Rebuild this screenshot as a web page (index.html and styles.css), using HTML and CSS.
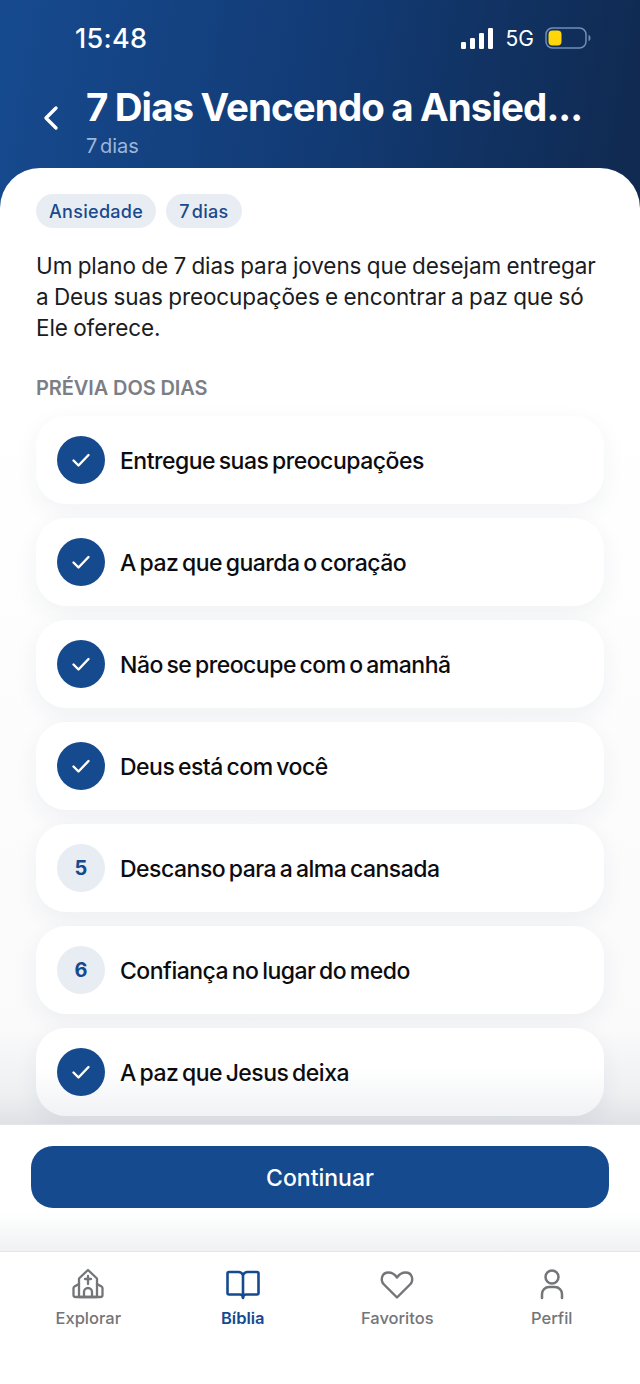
FILE: index.html
```html
<!DOCTYPE html>
<html lang="pt">
<head>
<meta charset="utf-8">
<title>7 Dias Vencendo a Ansiedade</title>
<link rel="stylesheet" href="styles.css">
</head>
<body>
<div class="screen">
  <header class="hero">
    <div class="status">
      <span class="time">15:48</span>
      <div class="status-right">
        <svg class="signal" width="33" height="21" viewBox="0 0 33 21"><rect x="0" y="14" width="5" height="7" rx="1.2"/><rect x="9" y="10" width="5" height="11" rx="1.2"/><rect x="18" y="5" width="5" height="16" rx="1.2"/><rect x="27" y="0" width="5" height="21" rx="1.2"/></svg>
        <span class="net">5G</span>
        <svg class="battery" width="46" height="22" viewBox="0 0 46 22"><rect x="1" y="1" width="40" height="20" rx="6.5" fill="none" stroke="#6f8db5" stroke-width="1.5"/><rect x="3.500" y="3.500" width="13" height="15" rx="4" fill="#ffd60a"/><path d="M44 8.500c1.300.6 1.300 4.400 0 5z" fill="#6f8db5" stroke="#6f8db5"/></svg>
      </div>
    </div>
    <div class="title-row">
      <svg class="back" width="18" height="26" viewBox="0 0 18 26"><path d="M14 3 4 13l10 10" fill="none" stroke="#fff" stroke-width="3.400" stroke-linecap="round" stroke-linejoin="round"/></svg>
      <div class="title-text">
        <h1>7 Dias Vencendo a Ansied...</h1>
        <p>7 dias</p>
      </div>
    </div>
  </header>
  <main class="sheet">
    <div class="tags"><span class="tag">Ansiedade</span><span class="tag">7 dias</span></div>
    <p class="desc">Um plano de 7 dias para jovens que desejam entregar a Deus suas preocupações e encontrar a paz que só Ele oferece.</p>
    <h2>PRÉVIA DOS DIAS</h2>
    <ul class="days">
      <li class="day"><span class="mark done"><svg width="20" height="16" viewBox="0 0 20 16"><path d="m2.500 8.500 5 5L17.500 3" fill="none" stroke="#fff" stroke-width="2.400" stroke-linecap="round" stroke-linejoin="round"/></svg></span><span class="day-name">Entregue suas preocupações</span></li>
      <li class="day"><span class="mark done"><svg width="20" height="16" viewBox="0 0 20 16"><path d="m2.500 8.500 5 5L17.500 3" fill="none" stroke="#fff" stroke-width="2.400" stroke-linecap="round" stroke-linejoin="round"/></svg></span><span class="day-name">A paz que guarda o coração</span></li>
      <li class="day"><span class="mark done"><svg width="20" height="16" viewBox="0 0 20 16"><path d="m2.500 8.500 5 5L17.500 3" fill="none" stroke="#fff" stroke-width="2.400" stroke-linecap="round" stroke-linejoin="round"/></svg></span><span class="day-name">Não se preocupe com o amanhã</span></li>
      <li class="day"><span class="mark done"><svg width="20" height="16" viewBox="0 0 20 16"><path d="m2.500 8.500 5 5L17.500 3" fill="none" stroke="#fff" stroke-width="2.400" stroke-linecap="round" stroke-linejoin="round"/></svg></span><span class="day-name">Deus está com você</span></li>
      <li class="day"><span class="mark">5</span><span class="day-name">Descanso para a alma cansada</span></li>
      <li class="day"><span class="mark">6</span><span class="day-name">Confiança no lugar do medo</span></li>
      <li class="day"><span class="mark done"><svg width="20" height="16" viewBox="0 0 20 16"><path d="m2.500 8.500 5 5L17.500 3" fill="none" stroke="#fff" stroke-width="2.400" stroke-linecap="round" stroke-linejoin="round"/></svg></span><span class="day-name">A paz que Jesus deixa</span></li>
    </ul>
  </main>
  <div class="cta"><button class="continue">Continuar</button></div>
  <nav class="tabs">
    <a class="tab">
      <svg width="36" height="34" viewBox="0 0 36 34" fill="none" stroke="currentColor" stroke-width="2.300" stroke-linecap="round" stroke-linejoin="round"><path d="M9 30V11.500L18 3l9 8.500V30z"/><path d="M9 17 4.500 19.500a2 2 0 0 0-1 1.800V28a2 2 0 0 0 2 2H30.500a2 2 0 0 0 2-2v-6.700a2 2 0 0 0-1-1.800L27 17"/><path d="M18 9v8M15 12h6"/><path d="M14 30v-5a4 4 0 0 1 8 0v5"/></svg>
      <span>Explorar</span>
    </a>
    <a class="tab active">
      <svg width="36" height="34" viewBox="0 0 36 34" fill="none" stroke="currentColor" stroke-width="2.600" stroke-linecap="round" stroke-linejoin="round"><path d="M18 8c-1-2-2.500-3-4.500-3H4a1.500 1.500 0 0 0-1.500 1.500V26A1.500 1.500 0 0 0 4 27.500h11c1.800 0 3 1 3 3 0-2 1.200-3 3-3h11a1.500 1.500 0 0 0 1.500-1.500V6.500A1.500 1.500 0 0 0 32 5h-9.500C20.500 5 19 6 18 8z"/><path d="M18 8v23"/></svg>
      <span>Bíblia</span>
    </a>
    <a class="tab">
      <svg width="36" height="34" viewBox="0 0 36 34" fill="none" stroke="currentColor" stroke-width="2.400" stroke-linecap="round" stroke-linejoin="round"><path d="M18 30.500 5 17.500C1 13.500 2.500 5.500 9.500 5.500c4 0 6.500 2.200 8.500 5 2-2.800 4.500-5 8.500-5 7 0 8.500 8 4.500 12z"/></svg>
      <span>Favoritos</span>
    </a>
    <a class="tab">
      <svg width="36" height="34" viewBox="0 0 36 34" fill="none" stroke="currentColor" stroke-width="2.500" stroke-linecap="round" stroke-linejoin="round"><circle cx="18" cy="10" r="6.500"/><path d="M8 31v-4a7 7 0 0 1 7-7h6a7 7 0 0 1 7 7v4"/></svg>
      <span>Perfil</span>
    </a>
  </nav>
</div>
</body>
</html>
```

FILE: styles.css
```css
* { box-sizing: border-box; }
html, body { margin: 0; padding: 0; }
body { font-family: Inter, "Noto Sans", sans-serif; background: #fff; color: #0d0f14; }
.screen { width: 640px; height: 1384px; display: flex; flex-direction: column; overflow: hidden; }

.hero { height: 208px; margin-bottom: -40px; flex: none; padding: 22px 49px 0 42px; background: linear-gradient(100deg, #164a8f 0%, #123b75 50%, #10294f 100%); color: #fff; }
.status { display: flex; justify-content: space-between; align-items: center; padding-left: 33px; height: 32px; }
.time { font-size: 27px; font-weight: 500; letter-spacing: .3px; }
.status-right { display: flex; align-items: center; gap: 11px; }
.signal { fill: #fff; margin-right: 1px; }
.net { font-size: 21px; font-weight: 400; }
.title-row { display: flex; align-items: flex-start; gap: 26px; margin-top: 30px; }
.back { margin-top: 21px; flex: none; }
.title-text { min-width: 0; }
h1 { margin: 0; font-size: 38.5px; line-height: 46px; font-weight: 700; letter-spacing: -.9px; word-spacing: -1px; white-space: nowrap; }
.title-text p { margin: 3px 0 0; font-size: 20px; line-height: 26px; color: #9db6da; word-spacing: -3px; }

.sheet { flex: 1; min-height: 0; overflow: hidden; padding: 26px 36px 0; background: linear-gradient(#fff 0, #fff 240px, #fafafb 860px, #eef0f2 925px, #dfe1e5 100%); border-radius: 40px 40px 0 0; }
.tags { display: flex; gap: 10px; }
.tag { height: 34px; padding: 0 13px; display: flex; align-items: center; border-radius: 17px; background: #e8edf4; color: #184a8c; font-size: 18px; font-weight: 500; letter-spacing: .3px; word-spacing: -3px; }
.desc { margin: 22px 0 0; font-size: 22.5px; line-height: 31px; color: #1a1c22; letter-spacing: -.1px; word-spacing: -.8px; }
h2 { margin: 32px 0 0; font-size: 20px; line-height: 26px; font-weight: 600; color: #7b7e85; letter-spacing: -.1px; }
.days { list-style: none; margin: 15px 0 0; padding: 0; display: flex; flex-direction: column; gap: 14px; }
.day { height: 88px; border-radius: 30px; background: #fff; display: flex; align-items: center; gap: 15px; padding-left: 21px; font-size: 23px; font-weight: 500; letter-spacing: -.5px; word-spacing: -2px; color: #0c0c10; box-shadow: 0 8px 24px rgba(30, 50, 90, .06); }
.day:last-child { background: linear-gradient(#fff 45%, #f1f2f5 100%); }
.day-name { padding-top: 2px; }
.mark { width: 48px; height: 48px; border-radius: 50%; flex: none; display: flex; align-items: center; justify-content: center; background: #e8edf4; color: #164a8f; font-size: 20px; font-weight: 700; letter-spacing: 0; }
.mark.done { background: #164a8f; }

.cta { flex: none; height: 127px; padding: 21px 31px 0; background: linear-gradient(#fff 0, #fff 70%, #f0f1f3 100%); border-top: 1px solid #e4e5e8; }
.continue { display: block; width: 100%; height: 62px; padding: 2px 0 0; border: 0; border-radius: 22px; background: #164a8f; color: #fff; font: 500 23px Inter, sans-serif; }

.tabs { flex: none; height: 133px; background: #fff; border-top: 1px solid #e4e5e8; display: grid; grid-template-columns: repeat(4, 154.500px); padding: 15px 11px 0; }
.tab { display: flex; flex-direction: column; align-items: center; gap: 7px; color: #737578; font-size: 16.500px; font-weight: 500; }
.tab.active { color: #164a8f; font-weight: 600; }
```
